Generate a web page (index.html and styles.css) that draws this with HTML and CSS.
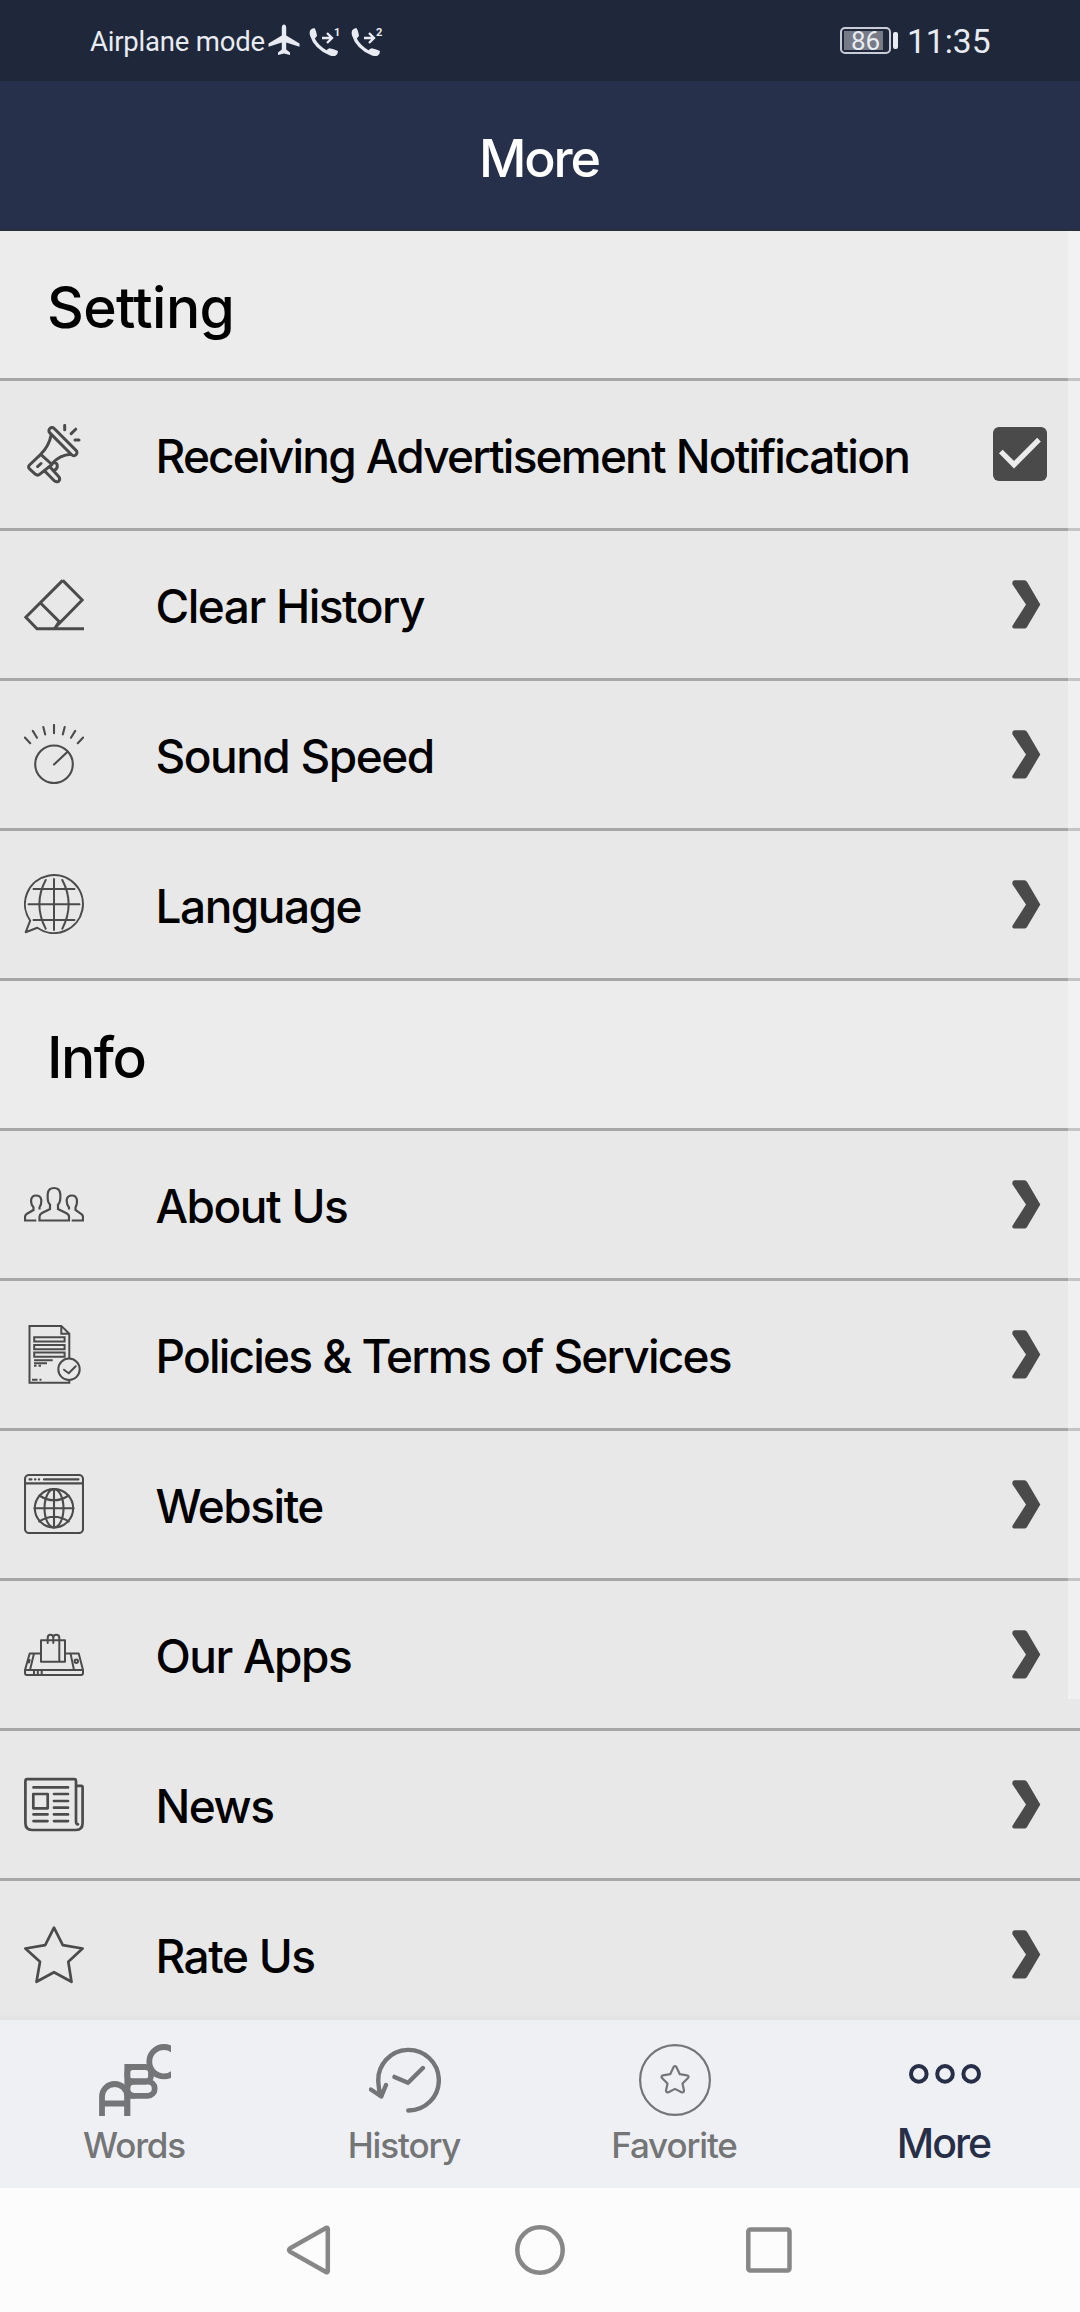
FILE: index.html
```html
<!DOCTYPE html>
<html lang="en">
<head>
<meta charset="utf-8">
<title>More</title>
<link rel="stylesheet" href="styles.css">
</head>
<body>
<div class="screen">
  <div class="status">
    <div class="status-left">
      <span class="status-mode">Airplane mode</span>
      <svg class="plane" width="32" height="32" viewBox="0 0 32 32"><path d="M16 .5c1.400 0 2.200 1.600 2.200 3.400v7.600l13.300 8v3.300l-13.300-4.200v7l3.800 2.900v2.600L16 29.500l-6 1.600v-2.600l3.800-2.900v-7L.5 22.800v-3.300l13.300-8V3.900C13.800 2.100 14.600.5 16 .5z"/></svg>
      <svg class="call" width="32" height="32" viewBox="0 0 32 32"><path d="M1 4.500Q2.500 2 5.500 2Q7.500 5 8 9.500Q7.500 11 5.800 12.500Q9.500 19.500 17.500 24.200Q19 22.800 20.500 22.300Q24.500 22.800 29 25Q29 28.500 26.500 29.800Q24 30.500 21 29.500Q5 23 1 9.500Q.3 6.500 1 4.500z"/><path class="call-arrow" d="M13 12h9M18 7l5 5l-5 5"/><text x="25" y="10">1</text></svg>
      <svg class="call" width="32" height="32" viewBox="0 0 32 32"><path d="M1 4.500Q2.500 2 5.500 2Q7.500 5 8 9.500Q7.500 11 5.800 12.500Q9.500 19.500 17.500 24.200Q19 22.800 20.500 22.300Q24.500 22.800 29 25Q29 28.500 26.500 29.800Q24 30.500 21 29.500Q5 23 1 9.500Q.3 6.500 1 4.500z"/><path class="call-arrow" d="M13 12h9M18 7l5 5l-5 5"/><text x="25" y="10">2</text></svg>
    </div>
    <div class="status-right">
      <div class="battery"><span class="battery-fill">86</span></div>
      <div class="battery-nub"></div>
      <span class="clock">11:35</span>
    </div>
  </div>
  <header class="header"><h1>More</h1></header>
  <main class="list">
    <h2 class="section section-open">Setting</h2>
    <div class="row">
      <svg class="icon w27" viewBox="0 0 60 60"><rect x="-3.100" y="-3.100" width="37.100" height="6.200" rx="3.100" transform="translate(28 6.700) rotate(45)"/><path d="M27 11.500Q25 22 16.700 30.300M46.700 30.300Q36 31 28 39.500M16.700 30.300L5.500 41Q3.700 42.900 5.500 44.800L11.500 50.300Q13.700 52 15.900 50.100L28 40.500ZM13.600 42.600L17 39.500M20.700 47L30 56.500Q32 58.600 34.600 57.300Q36.700 55 34.600 52.500L26 43M29.500 38.500Q33.500 38.500 33.300 42.500Q33 45.500 29.500 46.500M40.700 1.400V5.800M47.200 9.600L51.700 5.200M51 16H55"/></svg>
      <span class="label tight">Receiving Advertisement Notification</span>
      <svg class="check" width="54" height="54" viewBox="0 0 54 54"><rect width="54" height="54" rx="6"/><path d="M7.800 24.500L21 37.700L46 12.700"/></svg>
    </div>
    <div class="row">
      <svg class="icon w27" viewBox="0 0 60 60"><path class="miter" d="M38.700 6.400L1.800 43.300L13 54.700H60M38.700 6.400L58.200 26L30.500 54.200M16.300 28.700L35.300 47.700L31 54.200"/></svg>
      <span class="label">Clear History</span>
      <svg class="chevron" viewBox="0 0 29 49"><path d="M3 .3H12.500Q14 .3 15 1.800L28.300 24.400L15 47Q14 48.500 12.500 48.500H2Q0 48.500 .3 46L14 24.400L.5 4.500Q-.3 .3 3 .3z"/></svg>
    </div>
    <div class="row">
      <svg class="icon w18" viewBox="0 0 60 60"><circle cx="30" cy="40.300" r="18.800"/><path d="M30 40.500L43.300 28M.900 13.500L6.200 19.200M8.800 6.900L13 13.700M19.300 3L21.200 10.500M30 1V9.300M40.700 3L38.800 10.500M51.200 6.900L47 13.700M59.100 13.500L53.800 19.200"/></svg>
      <span class="label">Sound Speed</span>
      <svg class="chevron" viewBox="0 0 29 49"><path d="M3 .3H12.500Q14 .3 15 1.800L28.300 24.400L15 47Q14 48.500 12.500 48.500H2Q0 48.500 .3 46L14 24.400L.5 4.500Q-.3 .3 3 .3z"/></svg>
    </div>
    <div class="row">
      <svg class="icon w16" viewBox="0 0 60 60"><path d="M6.200 46.700A29 29 0 1 1 13.300 53.800L1.700 58.200ZM30 5V56M9.500 15H50.500M4.500 30.300H55.500M9.500 46H50.500M21.700 6Q9 30 21.700 54.700M38.300 6Q51 30 38.300 54.700"/></svg>
      <span class="label">Language</span>
      <svg class="chevron" viewBox="0 0 29 49"><path d="M3 .3H12.500Q14 .3 15 1.800L28.300 24.400L15 47Q14 48.500 12.500 48.500H2Q0 48.500 .3 46L14 24.400L.5 4.500Q-.3 .3 3 .3z"/></svg>
    </div>
    <h2 class="section">Info</h2>
    <div class="row">
      <svg class="icon w20" viewBox="0 0 60 60"><path class="miter" d="M15.500 46.500V42.500Q15.500 40.500 18 39L26 35V30.500Q23 28 23.800 19.500Q24.500 14 30 14Q35.500 14 36.200 19.500Q37 28 34 30.500V35L42 39Q45 40.500 45 42.500V46.500ZM12.300 46.500H1V43Q1 41 3 39.800L9.500 36V33.500Q6.500 30 7.200 25.500Q8 21.500 12 21.500Q16.500 21.500 17.200 25.500Q17.800 30 15.500 33.500V35.500M47.700 46.500H59V43Q59 41 57 39.800L51.500 36V33.500Q53.500 30 52.800 25.500Q52 21.500 48 21.500Q43.500 21.500 42.800 25.500Q42.200 30 45 33.500V35.500"/></svg>
      <span class="label">About Us</span>
      <svg class="chevron" viewBox="0 0 29 49"><path d="M3 .3H12.500Q14 .3 15 1.800L28.300 24.400L15 47Q14 48.500 12.500 48.500H2Q0 48.500 .3 46L14 24.400L.5 4.500Q-.3 .3 3 .3z"/></svg>
    </div>
    <div class="row">
      <svg class="icon w16" viewBox="0 0 60 60"><path class="miter" d="M45.300 35V9.700L37.300 1.900H5.500V58.800H45.300V56M37.300 2V9.700H45M10.200 13.300H40.600V17.600H10.200ZM10.200 21H40.600V25.300H10.200ZM10.200 28.600H40.600V32.700H10.200ZM10 36.300H28.700M10 39.200H23M10 41.800H12.500M14.500 41.800H17M8 55.700H13.500M15.500 55.700H17.500"/><circle cx="45" cy="45.300" r="10.700"/><path d="M40 45.700L44.700 49.200L51.700 42.300"/></svg>
      <span class="label tight">Policies &amp; Terms of Services</span>
      <svg class="chevron" viewBox="0 0 29 49"><path d="M3 .3H12.500Q14 .3 15 1.800L28.300 24.400L15 47Q14 48.500 12.500 48.500H2Q0 48.500 .3 46L14 24.400L.5 4.500Q-.3 .3 3 .3z"/></svg>
    </div>
    <div class="row">
      <svg class="icon w18" viewBox="0 0 60 60"><rect x="1" y="1" width="58" height="58" rx="4"/><path d="M1 9.400H59M5.500 5.400H7.500M11 5.400H11.400M14.800 5.400H15.200M20 5.400H54.500M30 15V53.500M10.500 34.300H49.500M15.300 21.500Q30 31 44.700 21.500M15.300 47.500Q30 38 44.700 47.500"/><circle cx="30" cy="34.300" r="19.200"/><ellipse cx="30" cy="34.300" rx="9.500" ry="19.200"/></svg>
      <span class="label">Website</span>
      <svg class="chevron" viewBox="0 0 29 49"><path d="M3 .3H12.500Q14 .3 15 1.800L28.300 24.400L15 47Q14 48.500 12.500 48.500H2Q0 48.500 .3 46L14 24.400L.5 4.500Q-.3 .3 3 .3z"/></svg>
    </div>
    <div class="row">
      <svg class="icon w16" viewBox="0 0 60 60"><path d="M17 29.400H5.700L1 46V49Q1 51 3 51H57Q59 51 59 49V46L54.700 29.400H41M1 46H59M10 29.400L6 46M46.500 29.400L50 46M17 16.200H41V37.700H17ZM35.300 16.200V37.700M23.700 19V14Q23.700 10.800 26.500 10.800Q29.300 10.800 29.300 14V19M29.300 14Q29.300 10.800 32.200 10.800Q35.300 10.800 35.300 14V19M10 46.500V51M13.800 46.500V51M17.700 46.500V51M5 38.500L5.700 36"/><circle cx="52.300" cy="37.300" r="1.700"/></svg>
      <span class="label">Our Apps</span>
      <svg class="chevron" viewBox="0 0 29 49"><path d="M3 .3H12.500Q14 .3 15 1.800L28.300 24.400L15 47Q14 48.500 12.500 48.500H2Q0 48.500 .3 46L14 24.400L.5 4.500Q-.3 .3 3 .3z"/></svg>
    </div>
    <div class="row">
      <svg class="icon w24" viewBox="0 0 60 60"><path d="M52 11.900H57.300Q58.600 11.900 58.600 13.400V49Q58.600 56 52 56H8Q1.400 56 1.400 49V7Q1.400 5.200 3 5.200H50.500Q52 5.200 52 7V47.500Q52 50.300 54 50.300M9.500 13.400H44M9.300 20H23.700V34.300H9.300ZM30 20H44M30 27H44M30 33.700H44M30 40.400H44M30 47.100H44M9.500 40.400H23.500M9.500 47.100H23.500"/></svg>
      <span class="label">News</span>
      <svg class="chevron" viewBox="0 0 29 49"><path d="M3 .3H12.500Q14 .3 15 1.800L28.300 24.400L15 47Q14 48.500 12.500 48.500H2Q0 48.500 .3 46L14 24.400L.5 4.500Q-.3 .3 3 .3z"/></svg>
    </div>
    <div class="row">
      <svg class="icon w24" viewBox="0 0 60 60"><path d="M30 3.700L38.800 21.200L58.600 24.500L44.300 37.700L47.500 57.800L30 48.200L12.500 57.800L16 37.700L1.400 24.500L21.200 21.200Z"/></svg>
      <span class="label">Rate Us</span>
      <svg class="chevron" viewBox="0 0 29 49"><path d="M3 .3H12.500Q14 .3 15 1.800L28.300 24.400L15 47Q14 48.500 12.500 48.500H2Q0 48.500 .3 46L14 24.400L.5 4.500Q-.3 .3 3 .3z"/></svg>
    </div>
    <div class="scrollbar"></div>
    <div class="list-shade"></div>
  </main>
  <nav class="tabs">
    <div class="tab">
      <svg class="tab-icon w6" viewBox="0 0 72 72"><rect x="3" y="40" width="25.300" height="50" rx="12.600"/><path d="M3 59.500H28M28.300 48V72M28.300 20V54.500"/><rect x="28.300" y="23" width="23.700" height="14.500" rx="5.500"/><rect x="28.300" y="37.500" width="27.400" height="14.300" rx="7"/><path d="M28.300 23H35M28.300 37.500H35M28.300 51.800H36"/><circle cx="65" cy="17.700" r="14.700"/></svg>
      <span class="tab-label">Words</span>
    </div>
    <div class="tab">
      <svg class="tab-icon w44" viewBox="0 0 72 72"><path d="M39.300 66.500A30.300 30.300 0 1 0 9.300 38Q9.500 46 12.300 52.500M1.900 45.500L12.300 52.500L17 41M25.500 32.900L39 38.700L53.900 24"/></svg>
      <span class="tab-label">History</span>
    </div>
    <div class="tab">
      <svg class="tab-icon w20" viewBox="0 0 72 72"><circle cx="36" cy="36" r="34.900"/><path d="M34.500 23.200Q36 21.200 37.500 23.200L40.800 30.200L48 31.300Q50.500 32 49 34L43.500 39.500L45 46.500Q45 49 42.500 48.300L36 44.900L29.500 48.300Q27 49 27 46.500L28.500 39.500L23 34Q21.500 32 24 31.300L31.200 30.200Z"/></svg>
      <span class="tab-label">Favorite</span>
    </div>
    <div class="tab active">
      <svg class="tab-icon w4" viewBox="0 0 72 72"><circle cx="9.800" cy="29.900" r="7.800"/><circle cx="36" cy="29.900" r="7.800"/><circle cx="62.200" cy="29.900" r="7.800"/></svg>
      <span class="tab-label">More</span>
    </div>
  </nav>
  <div class="sysnav">
    <svg viewBox="0 0 50 50"><path d="M41.800 3.800V46.200Q41.500 47.800 40 47L4 26.600Q2 25 4 23.400L40 3Q41.500 2.200 41.800 3.800z"/></svg>
    <svg viewBox="0 0 50 50"><circle cx="25" cy="25" r="22.700"/></svg>
    <svg viewBox="0 0 50 50"><rect x="4.300" y="4.500" width="41.200" height="41" rx="2"/></svg>
  </div>
</div>
</body>
</html>
```
FILE: styles.css
```css
* { box-sizing: border-box; }
body { margin: 0; font-family: Inter, "Liberation Sans", sans-serif; }
svg { display: block; flex: none; }
.screen { width: 1080px; height: 2312px; display: flex; flex-direction: column; overflow: hidden; }

.status { height: 81px; background: #1f273b; color: #e9ebf2; font-family: Roboto, sans-serif; display: flex; justify-content: space-between; padding: 0 90px; }
.status-left, .status-right { display: flex; align-items: center; }
.status-mode { font-size: 27.500px; width: 178px; white-space: nowrap; letter-spacing: -.2px; padding-top: 1px; }
.status svg { fill: #e9ebf2; }
.plane { margin-top: -2px; }
.call { margin-left: 9px; margin-top: 2px; }
.call + .call { margin-left: 10px; }
.call text { font: bold 11px Roboto, sans-serif; }
.call .call-arrow { fill: none; stroke: #e9ebf2; stroke-width: 2.4; }
.battery { width: 51px; height: 27px; border: 2px solid #c9ccd6; border-radius: 5px; padding: 2px; }
.battery-fill { display: block; width: 39px; height: 19px; background: #777b87; font-size: 26px; line-height: 20px; padding-left: 7px; }
.battery-nub { width: 5px; height: 17px; border-radius: 2px; background: #e9ebf2; margin: 0 9px 0 2px; }
.clock { font-size: 33.600px; width: 83px; white-space: nowrap; padding-top: 1px; }

.header { height: 150px; background: #26304a; border-bottom: 2px solid #282f3f; display: flex; align-items: center; justify-content: center; padding: 7px 2px 0 0; }
.header h1 { margin: 0; color: #fff; font-size: 52px; font-weight: 500; letter-spacing: -2.100px; }

.list { height: 1789px; overflow: hidden; position: relative; background: #e8e8e8; }
.section { margin: 0; height: 150px; border-bottom: 3px solid #a6a6a6; background: #ececec; padding: 6px 0 0 47px; display: flex; align-items: center; font-size: 57px; font-weight: 500; letter-spacing: -1.500px; }
.section-open { letter-spacing: -.6px; }
.row { height: 150px; border-bottom: 3px solid #a6a6a6; padding: 0 39px 1px 24px; display: flex; align-items: center; }
.icon { width: 60px; height: 60px; fill: none; stroke: #4b4b4b; stroke-linecap: round; stroke-linejoin: round; }
.icon .miter { stroke-linecap: butt; stroke-linejoin: miter; }
.w16 { stroke-width: 2; }
.w18 { stroke-width: 2.1; }
.w20 { stroke-width: 2.2; }
.w24 { stroke-width: 2.7; }
.w27 { stroke-width: 3; }
.w4 { stroke-width: 4; }
.w44 { stroke-width: 4.4; }
.w6 { stroke-width: 5.8; }
.label { flex: 1; margin-left: 71.5px; padding-top: 4px; font-size: 46px; font-weight: 500; letter-spacing: -1.500px; word-spacing: .5px; white-space: nowrap; color: #000; }
.tight { letter-spacing: -1.800px; }
.check { margin-right: -6px; }
.check rect { fill: #4a4a4a; }
.check path { fill: none; stroke: #ececec; stroke-width: 5.2; }
.chevron { width: 29px; height: 49px; fill: #4a4a4a; }
.scrollbar { position: absolute; top: 0; right: 0; width: 12px; height: 1468px; background: rgba(255, 255, 255, .34); }
.list-shade { position: absolute; left: 0; right: 0; bottom: 0; height: 9px; background: linear-gradient(rgba(226, 228, 226, 0), #e2e3e2); }

.tabs { height: 168px; background: #eff0f4; display: grid; grid-template-columns: repeat(4, 1fr); padding-top: 24px; color: #747577; }
.tab { display: flex; flex-direction: column; align-items: center; }
.tab-icon { width: 72px; height: 72px; fill: none; stroke: #747577; stroke-linecap: round; stroke-linejoin: round; }
.tab-icon.w6 { stroke-linecap: butt; }
.tab-label { font-size: 35px; line-height: 42px; font-weight: 500; margin-top: 8px; padding-right: 2px; letter-spacing: -1.150px; }
.active { color: #272f48; }
.active .tab-icon { stroke: #272f48; }
.active .tab-label { font-size: 41px; line-height: 42px; margin-top: 6px; padding-right: 3px; letter-spacing: -2px; }

.sysnav { height: 124px; background: #fcfcfc; display: flex; justify-content: center; align-items: center; gap: 179px; }
.sysnav svg { width: 50px; height: 50px; fill: none; stroke: #878787; stroke-width: 4.5; }
```
